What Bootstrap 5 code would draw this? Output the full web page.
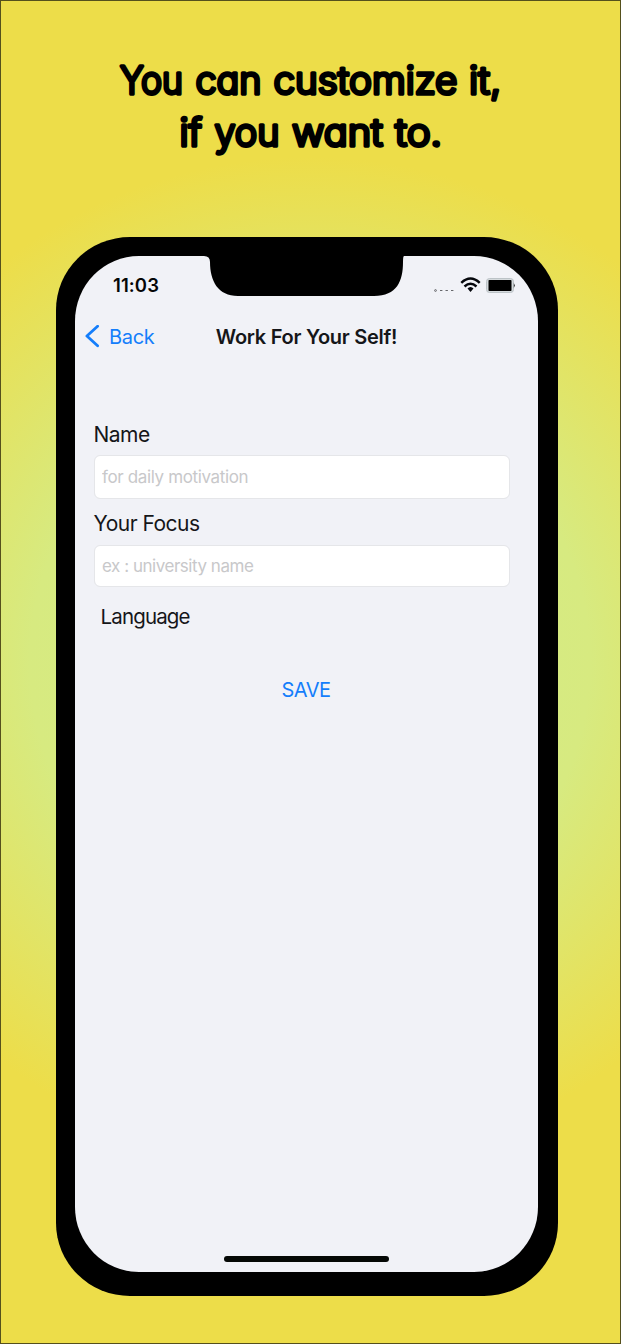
<!DOCTYPE html>
<html lang="en">
<head>
<meta charset="utf-8">
<meta name="viewport" content="width=device-width, initial-scale=1">
<title>Work For Your Self!</title>
<link href="https://cdn.jsdelivr.net/npm/bootstrap@5.3.0/dist/css/bootstrap.min.css" rel="stylesheet">
<style>
  body { font-family: Inter, "Liberation Sans", sans-serif; color: #151619; }
  .poster { height: 1344px; border: 1px solid #55501c; padding: 55px 0 0 55px;
    background: radial-gradient(circle 515px at 309px 661px, #d2ec8a 0, #d7ea80 280px, #eddd49 505px); }
  .headline { width: 621px; height: 181px; margin-left: -56px; }
  .headline text { font-family: Inter, sans-serif; font-weight: 300; font-size: 38px; font-feature-settings: "cv11";
    stroke: #000; stroke-width: 3.4px; stroke-linejoin: round; }
  .phone { width: 502px; height: 1059px; padding: 19px 20px 24px 19px; background: #000; border-radius: 74px / 73px; }
  .screen { height: 1016px; background: #f1f2f7; border-radius: 64px / 65px; }
  .notch { left: 129px; top: -1px; }
  .status { height: 60px; padding: 0 23px 0 38px; font-size: 18.5px; letter-spacing: .1px; font-weight: 600; color: #050608; }
  .titlebar { height: 42px; padding-left: 10px; font-size: 20px; }
  .titlebar a { letter-spacing: -.3px; }
  .title { left: 0; right: 0; font-weight: 600; letter-spacing: -.27px; }
  .ios { color: #147efb; }
  .fields { padding: 62px 28.5px 0 18.5px; font-size: 21px; letter-spacing: -.5px; }
  .fields label { line-height: 30px; }
  .fields .form-control { height: 44px; margin-top: 5px; padding: 0 7px 0 7.5px; font-size: 17px; letter-spacing: -.36px; border: 1px solid #e5e6e9; border-radius: 6px; }
  .fields #focus { height: 42px; margin-top: 6px; padding-bottom: 1px; letter-spacing: -.47px; }
  .fields .form-control::placeholder { color: #c8c8ca; opacity: 1; }
  .focus-label { margin-top: 10px; }
  .language { padding-left: 7px; margin-top: 15px; font-size: 20.5px; letter-spacing: -.85px; line-height: 30px; }
  .save { font-size: 20px; line-height: 30px; margin: 43px 0 0 9px; }
  .home-bar { width: 165px; height: 6px; border-radius: 3px; background: #050805; margin: 0 0 10px 149px; }
</style>
</head>
<body>
<main class="poster overflow-hidden">
  <svg class="headline d-block" viewBox="0 56 621 181" role="heading" aria-level="1">
    <text y="94"><tspan x="120" textLength="63" lengthAdjust="spacingAndGlyphs">You</tspan> <tspan x="195.500" textLength="66" lengthAdjust="spacingAndGlyphs">can</tspan> <tspan x="273.500" textLength="184" lengthAdjust="spacingAndGlyphs">customize</tspan> <tspan x="469" textLength="32" lengthAdjust="spacingAndGlyphs">it,</tspan></text>
    <text y="145.500"><tspan x="179.500" textLength="22.500" lengthAdjust="spacingAndGlyphs">if</tspan> <tspan x="214.500" textLength="65" lengthAdjust="spacingAndGlyphs">you</tspan> <tspan x="292" textLength="91" lengthAdjust="spacingAndGlyphs">want</tspan> <tspan x="395" textLength="47" lengthAdjust="spacingAndGlyphs">to.</tspan></text>
  </svg>
  <div class="phone">
    <div class="screen position-relative d-flex flex-column">
      <svg class="notch position-absolute" width="200" height="42" viewBox="0 0 200 42"><path d="M0 0H200V1Q199 1 199 7C199 26 193 41 170 41H34C14 41 6 26 6 7Q6 1 0 1Z"/></svg>
      <header class="status d-flex align-items-center justify-content-between">
        <span>11:03</span>
        <span class="d-flex align-items-center">
          <svg width="84" height="20" viewBox="0 0 84 20">
            <g fill="none" stroke="#66676b" stroke-width="1"><circle cx="4.500" cy="14.500" r=".9"/><path d="M9 14.500h2.400M14.500 14.500h2.400M20 14.500h2.400"/></g>
            <g fill="none" stroke="#05070c" stroke-width="2.500"><path d="M30.300 6.800Q39.500-1.700 48.700 6.800M33.500 10.500Q39.500 5.100 45.500 10.500"/></g>
            <path d="M39.500 11Q41.300 11 42.500 12.500L39.500 16 36.500 12.500Q37.700 11 39.500 11Z" fill="#05070c"/>
            <rect x="55.500" y="2.500" width="27" height="14" rx="3" fill="#d5dadd" stroke="#bcc3c7"/>
            <rect x="57.500" y="4" width="23" height="11" rx=".8"/>
            <path d="M82.800 7l1.200 2.500-1.200 2.500z" fill="#333"/>
          </svg>
        </span>
      </header>
      <nav class="titlebar position-relative d-flex align-items-center">
        <a class="ios d-flex align-items-center text-decoration-none position-relative z-1" href="#">
          <svg width="24" height="24" viewBox="0 0 24 24"><path d="M12.600 1.200L1.900 11l10.700 9.800" fill="none" stroke="#147efb" stroke-width="2.800" stroke-linecap="round" stroke-linejoin="round"/></svg>
          <span>Back</span>
        </a>
        <div class="title position-absolute text-center">Work For Your Self!</div>
      </nav>
      <form class="fields flex-grow-1">
        <label class="d-block" for="name">Name</label>
        <input class="form-control" id="name" placeholder="for daily motivation">
        <label class="focus-label d-block" for="focus">Your Focus</label>
        <input class="form-control" id="focus" placeholder="ex : university name">
        <div class="language">Language</div>
        <div class="save ios text-center">SAVE</div>
      </form>
      <div class="home-bar"></div>
    </div>
  </div>
</main>
<script src="https://cdn.jsdelivr.net/npm/bootstrap@5.3.0/dist/js/bootstrap.bundle.min.js"></script>
</body>
</html>
